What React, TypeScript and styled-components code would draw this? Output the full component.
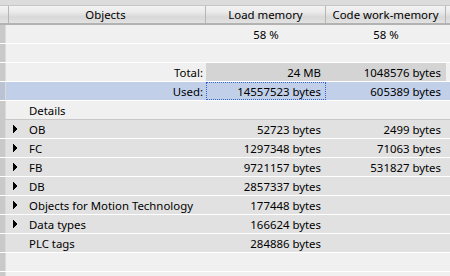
import React from 'react'
import styled, { createGlobalStyle, css } from 'styled-components'

const GlobalStyle = createGlobalStyle`
  body {
    margin: 0;
    background: #f0f0f0;
    font-family: 'Noto Sans', 'DejaVu Sans', sans-serif;
    font-size: 11.4px;
    color: #000;
  }
`

const COLUMNS = '6px 200px 120px 120px 1fr'

type RowKind = 'plain' | 'group' | 'selected' | 'detail'

const Table = styled.div`
  width: 450px;
  height: 276px;
  overflow: hidden;
  background: #f0f0f0;
`

const TopBand = styled.div`
  height: 5px;
  background: #dcdcdc;
`

const HeaderRow = styled.div`
  display: grid;
  grid-template-columns: ${COLUMNS};
  height: 17px;
  border-top: 1px solid #c6c6c6;
  border-bottom: 2px solid #b2b2b2;
  background: linear-gradient(#f3f3f3 0%, #ebebeb 35%, #d8d8d8 65%, #e2e2e2 100%);
`

const HeaderCell = styled.div`
  display: flex;
  align-items: center;
  justify-content: center;
  padding: 0 4px;
  border-right: 1px solid #b6b6b6;
  white-space: nowrap;
  overflow: hidden;
`

const rowBackground: Record<RowKind, string> = {
  plain: '#f0f0f0',
  group: '#f0f0f0',
  selected: '#c1cfe9',
  detail: '#e1e1e1',
}

const Row = styled.div<{ $kind: RowKind }>`
  display: grid;
  grid-template-columns: ${COLUMNS};
  height: 18px;
  background: ${(p) => rowBackground[p.$kind]};
  border-bottom: 1px solid ${(p) => (p.$kind === 'group' ? '#c8c8c8' : '#ffffff')};
`

const Gutter = styled.div<{ $selected?: boolean }>`
  background: ${(p) => (p.$selected ? '#b9c3d4' : '#c9c9c9')};
  border-right: 1px solid #dadada;
`

const NameCell = styled.div<{ $right?: boolean; $expandable?: boolean }>`
  display: flex;
  align-items: center;
  white-space: nowrap;
  overflow: hidden;
  ${(p) =>
    p.$right
      ? css`
          justify-content: flex-end;
          padding-right: 3px;
        `
      : css`
          padding-left: ${p.$expandable ? '7px' : '23px'};
        `}
`

const Expander = styled.svg`
  flex: none;
  width: 5px;
  height: 8px;
  margin-right: 11px;
  shape-rendering: crispEdges;
`

const ValueCell = styled.div<{ $center?: boolean; $shaded?: boolean; $focused?: boolean }>`
  display: flex;
  align-items: center;
  justify-content: ${(p) => (p.$center ? 'center' : 'flex-end')};
  padding-right: ${(p) => (p.$center ? '0' : '5px')};
  white-space: nowrap;
  background: ${(p) => (p.$shaded ? '#d4d4d4' : 'transparent')};
  ${(p) =>
    p.$focused &&
    css`
      outline: 1px dotted #2f62d8;
      outline-offset: -1px;
    `}
`

interface DetailItem {
  name: string
  load?: string
  code?: string
  expandable: boolean
}

const details: DetailItem[] = [
  { name: 'OB', load: '52723 bytes', code: '2499 bytes', expandable: true },
  { name: 'FC', load: '1297348 bytes', code: '71063 bytes', expandable: true },
  { name: 'FB', load: '9721157 bytes', code: '531827 bytes', expandable: true },
  { name: 'DB', load: '2857337 bytes', expandable: true },
  { name: 'Objects for Motion Technology', load: '177448 bytes', expandable: true },
  { name: 'Data types', load: '166624 bytes', expandable: true },
  { name: 'PLC tags', load: '284886 bytes', expandable: false },
]

const EmptyRow = () => (
  <Row $kind="plain">
    <Gutter />
    <NameCell />
    <ValueCell />
    <ValueCell />
    <div />
  </Row>
)

export default function App() {
  return (
    <>
      <GlobalStyle />
      <Table>
        <TopBand />
        <HeaderRow>
          <HeaderCell />
          <HeaderCell>Objects</HeaderCell>
          <HeaderCell>Load memory</HeaderCell>
          <HeaderCell>Code work-memory</HeaderCell>
          <HeaderCell />
        </HeaderRow>

        <Row $kind="plain">
          <Gutter />
          <NameCell />
          <ValueCell $center>58 %</ValueCell>
          <ValueCell $center>58 %</ValueCell>
          <div />
        </Row>
        <EmptyRow />
        <Row $kind="plain">
          <Gutter />
          <NameCell $right>Total:</NameCell>
          <ValueCell $shaded>24 MB</ValueCell>
          <ValueCell $shaded>1048576 bytes</ValueCell>
          <div />
        </Row>
        <Row $kind="selected">
          <Gutter $selected />
          <NameCell $right>Used:</NameCell>
          <ValueCell $focused>14557523 bytes</ValueCell>
          <ValueCell>605389 bytes</ValueCell>
          <div />
        </Row>
        <Row $kind="group">
          <Gutter />
          <NameCell>Details</NameCell>
          <ValueCell />
          <ValueCell />
          <div />
        </Row>

        {details.map((item) => (
          <Row key={item.name} $kind="detail">
            <Gutter />
            <NameCell $expandable={item.expandable}>
              {item.expandable && (
                <Expander viewBox="0 0 5 8">
                  <polygon points="0,0 4.5,4 0,8" fill="#000" />
                </Expander>
              )}
              {item.name}
            </NameCell>
            <ValueCell>{item.load}</ValueCell>
            <ValueCell>{item.code}</ValueCell>
            <div />
          </Row>
        ))}

        <EmptyRow />
        <EmptyRow />
      </Table>
    </>
  )
}
